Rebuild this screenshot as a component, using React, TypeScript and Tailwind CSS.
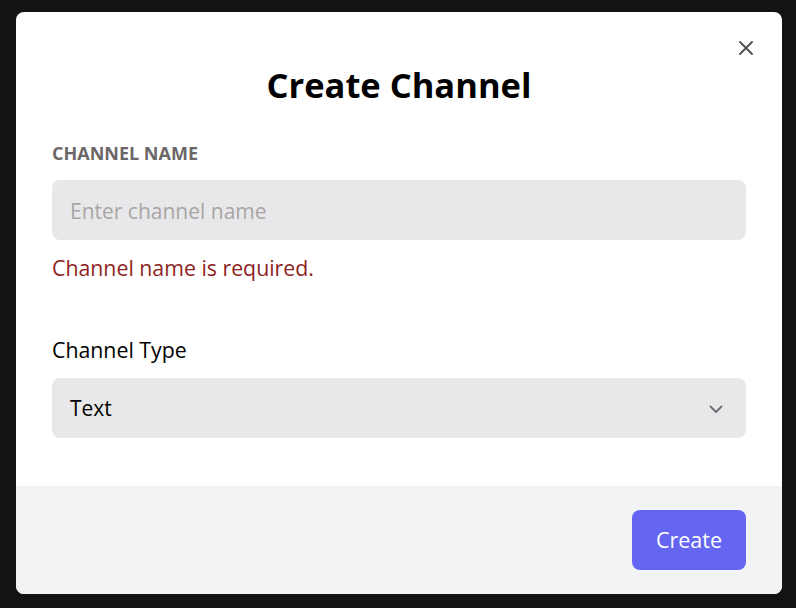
import React from 'react';

const CreateChannelModal: React.FC = () => {
    return (
        <div className="w-[766px] h-[582px] bg-white rounded-lg overflow-hidden flex flex-col">
            {/* Body */}
            <div className="relative flex-1 px-9 pt-[53px]">
                <button className="absolute right-[28px] top-[28px] w-4 h-4 flex items-center justify-center text-[#4e4e52]">
                    <svg width="16" height="16" viewBox="0 0 16 16" fill="none" stroke="currentColor" strokeWidth="1.8" strokeLinecap="round">
                        <path d="M2 2L14 14M14 2L2 14" />
                    </svg>
                </button>
                <h1 className="text-[34.5px] leading-[40px] font-bold text-black text-center">
                    Create Channel
                </h1>

                <label className="block mt-9 text-[18px] leading-6 font-bold uppercase text-[#6b6667]">
                    Channel Name
                </label>
                <input
                    className="mt-[15px] w-full h-[60px] rounded-lg bg-[#e8e8ea] px-[18px] pt-px text-[21px] text-black placeholder:text-[#a9a5a5] outline-none"
                    placeholder="Enter channel name"
                />
                <p className="mt-[14px] text-[21.3px] leading-7 text-[#8e1f22]">Channel name is required.</p>

                <label className="block mt-[54px] text-[21.3px] leading-7 text-black">Channel Type</label>
                <div className="mt-[14px] w-full h-[60px] rounded-lg bg-[#e8e8ea] pl-[18px] pr-[22px] pt-px flex items-center justify-between">
                    <span className="text-[21px] text-black">Text</span>
                    <svg width="16" height="16" viewBox="0 0 16 16" fill="none" stroke="#6b6b70" strokeWidth="1.8" strokeLinecap="round" strokeLinejoin="round">
                        <path d="M2.5 5.5L8 11L13.5 5.5" />
                    </svg>
                </div>
            </div>

            {/* Footer */}
            <div className="h-[108px] bg-[#f2f3f5] px-9 flex items-center justify-end">
                <button className="w-[114px] h-[60px] rounded-lg bg-[#6466f1] text-white text-[21.5px]">Create</button>
            </div>
        </div>
    );
};

export default function App() {
    return (
        <div
            className="min-h-screen bg-[#141213] pt-3 pl-4"
            style={{ fontFamily: '"Open Sans", sans-serif' }}
        >
            <CreateChannelModal />
        </div>
    );
}
